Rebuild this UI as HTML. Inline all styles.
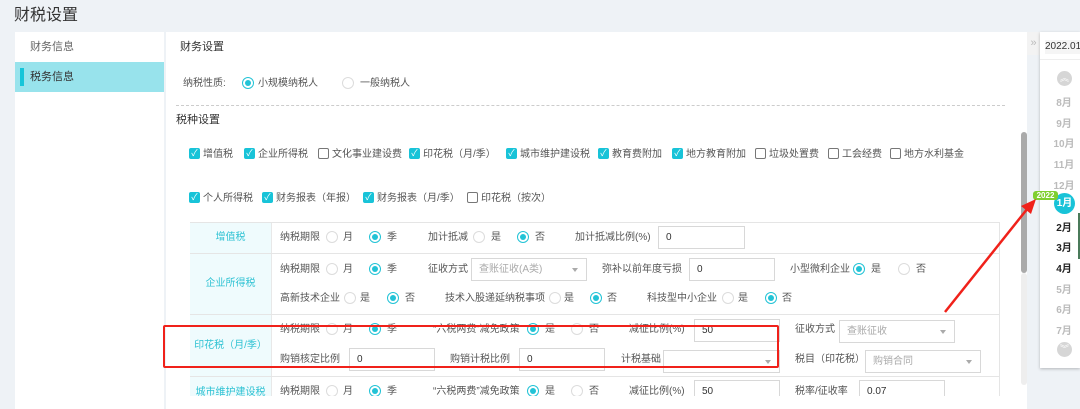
<!DOCTYPE html><html><head><meta charset="utf-8"><style>
*{margin:0;padding:0;box-sizing:border-box}
body{width:1080px;height:409px;background:#eef2f6;position:relative;overflow:hidden;font-family:"Liberation Sans","Noto Sans CJK SC",sans-serif;color:#555}
.a{position:absolute}
.t{position:absolute;font-size:10px;line-height:12px;white-space:nowrap;color:#555}
.r{position:absolute;width:12px;height:12px;border:1px solid #dcdcdc;border-radius:50%;background:#fff}
.rc{border-color:#22c3d6}
.rc:after{content:"";position:absolute;left:2px;top:2px;width:6px;height:6px;border-radius:50%;background:#22c3d6}
.c{position:absolute;width:11px;height:11px;border-radius:2px;background:#18c3d8;color:#fff;font-size:9px;line-height:11px;text-align:center}
.cu{position:absolute;width:11px;height:11px;border-radius:2px;border:1px solid #777;background:#fff}
.in{position:absolute;height:23px;border:1px solid #d8d8d8;background:#fff;font-size:10px;line-height:21px;padding-left:7px;color:#333}
.se{position:absolute;height:23px;border:1px solid #d8d8d8;background:#fff;font-size:10px;line-height:21px;padding-left:7px;color:#aaa}
.se:after{content:"";position:absolute;right:8px;top:9px;border:3px solid transparent;border-top:4px solid #aaa}
.lab{position:absolute;left:190px;width:82px;background:#effbfd;color:#2ec2d3;font-size:10px;text-align:center;border-right:1px solid #e8e8e8}
.row{position:absolute;left:190px;width:810px;border:1px solid #e5e5e5;border-top:none}
.m{position:absolute;left:1052px;width:24px;text-align:center;font-size:10px;color:#bbb;font-weight:bold}
</style></head><body>
<div class="t" style="left:14px;top:6px;font-size:16px;line-height:20px;color:#333">财税设置</div>
<div class="a" style="left:15px;top:32px;width:149px;height:377px;background:#fff"></div>
<div class="t" style="left:30px;top:41px;font-size:11px;color:#666">财务信息</div>
<div class="a" style="left:15px;top:62px;width:149px;height:30px;background:#98e3ec"></div>
<div class="a" style="left:20px;top:68px;width:4px;height:18px;background:#16c5d9"></div>
<div class="t" style="left:30px;top:71px;font-size:11px;color:#333">税务信息</div>
<div class="a" style="left:166px;top:32px;width:861px;height:377px;background:#fff"></div>
<div class="t" style="left:180px;top:41px;font-size:11px;color:#333">财务设置</div>
<div class="t" style="left:183px;top:78px">纳税性质:</div>
<div class="r rc" style="left:242px;top:77px"></div><div class="t" style="left:258px;top:78px">小规模纳税人</div>
<div class="r" style="left:342px;top:77px"></div><div class="t" style="left:360px;top:78px">一般纳税人</div>
<div class="a" style="left:176px;top:105px;width:829px;border-top:1px dashed #ccc"></div>
<div class="t" style="left:176px;top:114px;font-size:11px;color:#333">税种设置</div>
<div class="c" style="left:189px;top:148px">✓</div><div class="t" style="left:203px;top:149px">增值税</div>
<div class="c" style="left:244px;top:148px">✓</div><div class="t" style="left:258px;top:149px">企业所得税</div>
<div class="cu" style="left:318px;top:148px"></div><div class="t" style="left:332px;top:149px">文化事业建设费</div>
<div class="c" style="left:409px;top:148px">✓</div><div class="t" style="left:423px;top:149px">印花税（月/季）</div>
<div class="c" style="left:506px;top:148px">✓</div><div class="t" style="left:520px;top:149px">城市维护建设税</div>
<div class="c" style="left:598px;top:148px">✓</div><div class="t" style="left:612px;top:149px">教育费附加</div>
<div class="c" style="left:672px;top:148px">✓</div><div class="t" style="left:686px;top:149px">地方教育附加</div>
<div class="cu" style="left:755px;top:148px"></div><div class="t" style="left:769px;top:149px">垃圾处置费</div>
<div class="cu" style="left:828px;top:148px"></div><div class="t" style="left:842px;top:149px">工会经费</div>
<div class="cu" style="left:890px;top:148px"></div><div class="t" style="left:904px;top:149px">地方水利基金</div>
<div class="c" style="left:189px;top:192px">✓</div><div class="t" style="left:203px;top:193px">个人所得税</div>
<div class="c" style="left:262px;top:192px">✓</div><div class="t" style="left:276px;top:193px">财务报表（年报）</div>
<div class="c" style="left:363px;top:192px">✓</div><div class="t" style="left:377px;top:193px">财务报表（月/季）</div>
<div class="cu" style="left:467px;top:192px"></div><div class="t" style="left:481px;top:193px">印花税（按次）</div>
<div class="a" style="left:190px;top:222px;width:810px;border-top:1px solid #e5e5e5"></div>
<div class="row" style="top:222px;height:32px"></div>
<div class="row" style="top:253px;height:62px"></div>
<div class="row" style="top:314px;height:63px"></div>
<div class="row" style="top:376px;height:33px"></div>
<div class="lab" style="top:223px;height:30px;line-height:30px">增值税</div>
<div class="lab" style="top:254px;height:60px;line-height:60px">企业所得税</div>
<div class="lab" style="top:315px;height:61px;line-height:61px">印花税（月/季）</div>
<div class="lab" style="top:377px;height:32px;line-height:32px">城市维护建设税</div>
<div class="t" style="left:280px;top:232px">纳税期限</div>
<div class="r" style="left:326px;top:231px"></div><div class="t" style="left:343px;top:232px">月</div>
<div class="r rc" style="left:369px;top:231px"></div><div class="t" style="left:387px;top:232px">季</div>
<div class="t" style="left:428px;top:232px">加计抵减</div>
<div class="r" style="left:473px;top:231px"></div><div class="t" style="left:491px;top:232px">是</div>
<div class="r rc" style="left:517px;top:231px"></div><div class="t" style="left:535px;top:232px">否</div>
<div class="t" style="left:575px;top:232px">加计抵减比例(%)</div>
<div class="in" style="left:658px;top:226px;width:87px">0</div>
<div class="t" style="left:280px;top:264px">纳税期限</div>
<div class="r" style="left:326px;top:263px"></div><div class="t" style="left:343px;top:264px">月</div>
<div class="r rc" style="left:369px;top:263px"></div><div class="t" style="left:387px;top:264px">季</div>
<div class="t" style="left:428px;top:264px">征收方式</div>
<div class="se" style="left:471px;top:258px;width:116px">查账征收(A类)</div>
<div class="t" style="left:602px;top:264px">弥补以前年度亏损</div>
<div class="in" style="left:689px;top:258px;width:86px">0</div>
<div class="t" style="left:790px;top:264px">小型微利企业</div>
<div class="r rc" style="left:853px;top:263px"></div><div class="t" style="left:871px;top:264px">是</div>
<div class="r" style="left:898px;top:263px"></div><div class="t" style="left:916px;top:264px">否</div>
<div class="t" style="left:280px;top:293px">高新技术企业</div>
<div class="r" style="left:344px;top:292px"></div><div class="t" style="left:360px;top:293px">是</div>
<div class="r rc" style="left:387px;top:292px"></div><div class="t" style="left:405px;top:293px">否</div>
<div class="t" style="left:445px;top:293px">技术入股递延纳税事项</div>
<div class="r" style="left:549px;top:292px"></div><div class="t" style="left:564px;top:293px">是</div>
<div class="r rc" style="left:590px;top:292px"></div><div class="t" style="left:607px;top:293px">否</div>
<div class="t" style="left:647px;top:293px">科技型中小企业</div>
<div class="r" style="left:722px;top:292px"></div><div class="t" style="left:738px;top:293px">是</div>
<div class="r rc" style="left:765px;top:292px"></div><div class="t" style="left:782px;top:293px">否</div>
<div class="t" style="left:280px;top:324px">纳税期限</div>
<div class="r" style="left:326px;top:323px"></div><div class="t" style="left:343px;top:324px">月</div>
<div class="r rc" style="left:369px;top:323px"></div><div class="t" style="left:387px;top:324px">季</div>
<div class="t" style="left:433px;top:324px">“六税两费”减免政策</div>
<div class="r rc" style="left:527px;top:323px"></div><div class="t" style="left:545px;top:324px">是</div>
<div class="r" style="left:571px;top:323px"></div><div class="t" style="left:589px;top:324px">否</div>
<div class="t" style="left:629px;top:324px">减征比例(%)</div>
<div class="in" style="left:694px;top:319px;width:86px">50</div>
<div class="t" style="left:795px;top:324px">征收方式</div>
<div class="se" style="left:839px;top:320px;width:116px">查账征收</div>
<div class="t" style="left:280px;top:354px">购销核定比例</div>
<div class="in" style="left:349px;top:348px;width:86px">0</div>
<div class="t" style="left:450px;top:354px">购销计税比例</div>
<div class="in" style="left:519px;top:348px;width:86px">0</div>
<div class="t" style="left:621px;top:354px">计税基础</div>
<div class="se" style="left:663px;top:350px;width:117px"></div>
<div class="t" style="left:795px;top:354px">税目（印花税）</div>
<div class="se" style="left:865px;top:350px;width:116px">购销合同</div>
<div class="t" style="left:280px;top:386px">纳税期限</div>
<div class="r" style="left:326px;top:385px"></div><div class="t" style="left:343px;top:386px">月</div>
<div class="r rc" style="left:369px;top:385px"></div><div class="t" style="left:387px;top:386px">季</div>
<div class="t" style="left:433px;top:386px">“六税两费”减免政策</div>
<div class="r rc" style="left:527px;top:385px"></div><div class="t" style="left:545px;top:386px">是</div>
<div class="r" style="left:571px;top:385px"></div><div class="t" style="left:589px;top:386px">否</div>
<div class="t" style="left:629px;top:386px">减征比例(%)</div>
<div class="in" style="left:694px;top:380px;width:86px">50</div>
<div class="t" style="left:795px;top:386px">税率/征收率</div>
<div class="in" style="left:859px;top:380px;width:86px">0.07</div>
<div class="a" style="left:166px;top:396px;width:861px;height:13px;background:#fff"></div>
<div class="a" style="left:163px;top:325px;width:616px;height:43px;border:2px solid #f0211a;border-radius:2px"></div>
<div class="a" style="left:1021px;top:132px;width:6px;height:141px;background:#aaa;border-radius:3px"></div>
<div class="a" style="left:1021px;top:273px;width:6px;height:112px;background:#eee;border-radius:3px"></div>
<div class="a" style="left:1027px;top:32px;width:13px;height:377px;background:#eef2f6"></div>
<div class="a" style="left:1027px;top:32px;width:13px;height:23px;background:#f3f3f3;color:#bbb;font-size:11px;line-height:23px;text-align:center">»</div>
<div class="a" style="left:1040px;top:32px;width:40px;height:336px;background:#fff;box-shadow:0 1px 3px rgba(0,0,0,.25)"></div>
<div class="a" style="left:1040px;top:32px;width:40px;height:28px;border-bottom:1px solid #eee"></div>
<div class="t" style="left:1045px;top:40px;font-size:10px;color:#333;background:#f5f5f5;padding:1px 0">2022.01</div>
<div class="a" style="left:1057px;top:71px;width:15px;height:15px;border-radius:50%;background:#d6d6d6;color:#fff;font-size:9px;line-height:15px;text-align:center">︽</div>
<div class="m" style="top:94px">8月</div><div class="m" style="top:115px">9月</div><div class="m" style="top:135px">10月</div><div class="m" style="top:156px">11月</div><div class="m" style="top:177px">12月</div>
<div class="a" style="left:1054px;top:193px;width:21px;height:21px;border-radius:50%;background:#18c3d8;color:#fff;font-size:10px;font-weight:bold;line-height:21px;text-align:center">1月</div>
<div class="a" style="left:1033px;top:191px;width:25px;height:9px;border-radius:3px;background:#7fcf2f;color:#fff;font-size:8px;font-weight:bold;line-height:9px;text-align:center">2022</div>
<div class="m" style="top:219px;color:#222">2月</div><div class="m" style="top:239px;color:#222">3月</div><div class="m" style="top:260px;color:#222">4月</div>
<div class="m" style="top:281px">5月</div><div class="m" style="top:301px">6月</div><div class="m" style="top:322px">7月</div>
<div class="a" style="left:1057px;top:342px;width:15px;height:15px;border-radius:50%;background:#d6d6d6;color:#fff;font-size:9px;line-height:15px;text-align:center">︾</div>
<div class="a" style="left:1078px;top:213px;width:2px;height:46px;background:#4a7a5a"></div>
<svg class="a" style="left:0;top:0" width="1080" height="409"><line x1="945" y1="312" x2="1028" y2="208" stroke="#f0211a" stroke-width="2.5"/><polygon points="1036,199 1021,206 1031,214" fill="#f0211a"/></svg>
</body></html>
